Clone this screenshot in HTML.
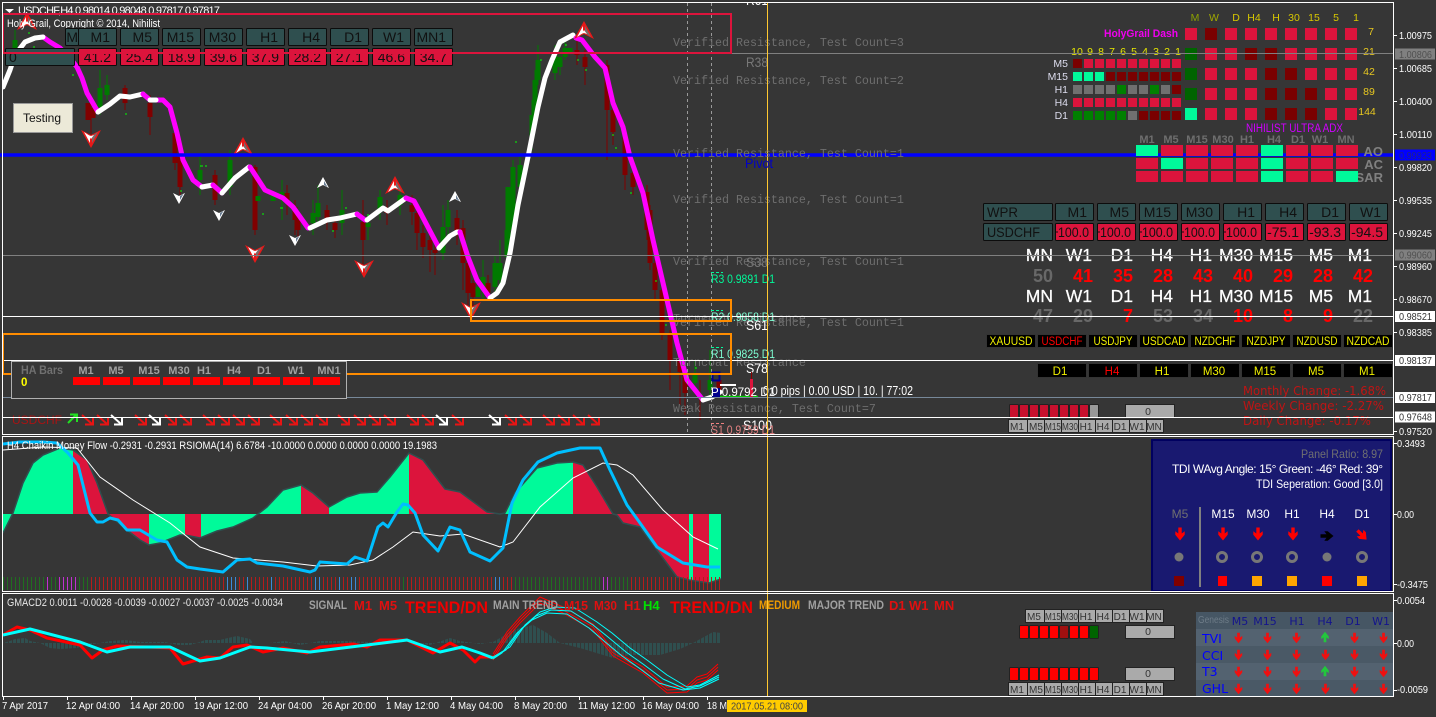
<!DOCTYPE html>
<html><head><meta charset="utf-8"><title>USDCHF,H4</title>
<style>
html,body{margin:0;padding:0;background:#363636;width:1436px;height:717px;overflow:hidden}
svg{display:block;position:absolute;left:0;top:0;font-family:"Liberation Sans",sans-serif}
.m{font-family:"Liberation Mono",monospace}
.d{font-family:"DejaVu Sans",sans-serif}
</style></head><body>
<svg width="1436" height="717" viewBox="0 0 1436 717" xmlns="http://www.w3.org/2000/svg">
<defs>
<clipPath id="c1"><rect x="3" y="3" width="1390" height="431"/></clipPath>
<clipPath id="c2"><rect x="3" y="437" width="1390" height="154"/></clipPath>
<clipPath id="c3"><rect x="3" y="594" width="1390" height="102"/></clipPath>
<pattern id="hb" width="4" height="10" patternUnits="userSpaceOnUse" x="1"><rect width="3" height="10" fill="#2f4f4f"/></pattern>
<path id="da" d="M-1.7,-6.5h3.4v6l3-2.2v3.4l-4.7,5.8-4.7,-5.8v-3.4l3,2.2z"/>
<path id="sa" d="M-6,-5L4,4M-3,4.5H5V-3" fill="none" stroke-width="2"/>
<g id="mu"><path d="M0,-10L10,8 0,3 -10,8Z" fill="#e81818"/><path d="M-1,-5L-7,6 -1,2Z" fill="#fff"/><path d="M1,-5L7,6 1,2Z" fill="#7a6a6a"/><path d="M0,-1L3,3 0,2 -3,3Z" fill="#fff"/></g>
<g id="wu"><path d="M0,-6L6,5 0,2 -6,5Z" fill="#fff"/><path d="M1,-2L4.5,4 1,2Z" fill="#667a90"/></g>
</defs>

<!-- candles -->
<g clip-path="url(#c1)">
<path fill="none" stroke="#800000" stroke-width="1" d="M91,95V135M125,85V110M150,95V135M175,120V170M180,150V195M215,170V205M255,165V235M287,185V215M295,200V235M298,215V240M327,205V230M335,218V238M363,200V270M387,200V225M412,195V225M417,205V250M423,225V258M430,235V272M435,245V275M457,210V245M463,220V290M468,255V305M473,280V310M488,275V300M577,40V65M585,50V85M607,60V160M613,105V145M625,130V190M633,170V195M647,185V240M650,205V270M655,260V300M662,285V340M670,330V390M680,350V405M685,365V415M700,380V420"/>
<path fill="none" stroke="#007a00" stroke-width="1" d="M15,30V60M100,70V115M107,75V100M200,155V195M230,150V195M282,180V220M313,200V235M318,185V225M342,190V235M368,215V240M380,190V220M400,190V215M443,205V260M448,200V235M483,260V300M495,255V295M500,240V285M507,215V265M513,160V240M520,155V195M532,100V150M535,70V120M538,45V85M555,45V80M560,50V75M565,42V60M695,360V390M710,350V400"/>
<path fill="none" stroke="#800000" stroke-width="5" d="M88,103V120M93,108V118M125,88V103M150,103V117M175,133V163M180,157V187M215,175V200M255,167V230M287,193V203M295,207V220M298,220V230M327,210V220M335,223V230M363,222V240M387,208V213M412,205V212M417,213V233M423,233V247M430,240V250M435,250V253M457,218V230M463,228V263M468,263V293M473,283V297M488,283V293M577,50V55M585,57V67M607,65V110M613,110V132M625,137V175M633,173V187M647,192V230M650,210V263M655,263V290M662,290V333M670,333V360M680,360V372M685,370V393M719,380V392"/>
<path fill="none" stroke="#007a00" stroke-width="5" d="M15,40V48M100,88V107M107,85V95M200,170V180M230,160V187M258,196V201M273,195V201M282,192V198M313,213V223M318,203V217M342,210V223M368,223V227M380,197V210M400,195V205M443,227V253M448,210V227M478,287V297M483,277V290M495,263V287M500,263V280M507,230V257M508,187V240M513,167V230M520,165V187M532,115V138M535,80V115M538,60V80M555,55V73M560,57V67M565,48V57M570,48V53M695,373V383M710,380V390"/>
<path fill="none" stroke="#0f0" stroke-width="1" d="M28,33h2M33,47h2M72,75h2M125,114h2M180,191h2M200,166h3M205,166h2M262,214h2M280,208h3M332,231h2M345,208h2M367,215h2M478,285h2M515,142h2M530,155h2M540,60h2M565,45h2M577,60h2M585,70h2M612,135h2M615,148h2M630,193h2M655,281h2M665,325h2M695,368h2"/>

<!-- price line -->
<g fill="none" stroke-width="5" stroke-linejoin="round" stroke-linecap="round">
<polyline stroke="#ff00ff" points="43,37 50,42 60,48 70,58 77,67 82,78 87,93 98,112"/>
<polyline stroke="#fff" points="3,87 10,70 15,55 25,42 35,38 43,37"/>
<polyline stroke="#fff" points="98,112 110,104 120,96 130,97 143,94"/>
<polyline stroke="#ff00ff" points="143,94 150,100 163,100 170,107 177,133 183,160 193,180 202,187"/>
<polyline stroke="#fff" points="150,100 156,100"/>
<polyline stroke="#fff" points="202,187 213,185"/>
<polyline stroke="#ff00ff" points="213,185 222,193"/>
<polyline stroke="#fff" points="222,193 235,178 249,167"/>
<polyline stroke="#ff00ff" points="250,167 265,190 283,198 293,207 308,228"/>
<polyline stroke="#fff" points="310,228 327,220 340,218 357,214"/>
<polyline stroke="#ff00ff" points="357,214 365,220"/>
<polyline stroke="#fff" points="367,220 383,208 388,211 406,198"/>
<polyline stroke="#ff00ff" points="406,198 414,201 420,212 439,248"/>
<polyline stroke="#fff" points="439,248 450,236 457,232 460,232"/>
<polyline stroke="#ff00ff" points="460,232 468,257 477,280 490,298"/>
<polyline stroke="#fff" points="490,298 497,293 503,283 510,253 518,205 528,157 538,107 545,78 552,60 560,42 573,35"/>
<polyline stroke="#ff00ff" points="576,38 582,40 595,57 605,68 613,103 623,127 630,157 643,193 653,240 667,300 677,343 687,380 703,400"/>
<polyline stroke="#fff" points="703,400 712,397 720,392"/>
</g>

<!-- markers -->
<use href="#mu" transform="translate(27,22)"/>
<use href="#mu" transform="translate(91,138) scale(1,-1)"/>
<use href="#mu" transform="translate(243,147)"/>
<use href="#wu" transform="translate(179,198) scale(1,-1)"/>
<use href="#wu" transform="translate(219,215) scale(1,-1)"/>
<use href="#wu" transform="translate(295,240) scale(1,-1)"/>
<use href="#wu" transform="translate(323,183)"/>
<use href="#mu" transform="translate(395,186)"/>
<use href="#wu" transform="translate(455,197)"/>
<use href="#mu" transform="translate(255,253) scale(1,-1)"/>
<use href="#mu" transform="translate(364,268) scale(1,-1)"/>
<use href="#mu" transform="translate(471,310) scale(1,-1)"/>
<use href="#mu" transform="translate(584,31)"/>
</g>

<!-- vertical lines -->
<path d="M687.5,3V434M711.5,3V434" stroke="#9a9a9a" stroke-dasharray="3 3" fill="none"/>

<!-- main chart text -->
<g clip-path="url(#c1)">
<g class="m" font-size="11.67" fill="#6e6e6e">
<text x="673" y="46">Verified Resistance, Test Count=3</text>
<text x="673" y="84">Verified Resistance, Test Count=2</text>
<text x="673" y="203">Verified Resistance, Test Count=1</text>
<text x="673" y="265">Verified Resistance, Test Count=1</text>
<text x="673" y="322">Turncoat Resistance</text>
<text x="673" y="326">Verified Resistance, Test Count=1</text>
<text x="673" y="366">Turncoat Resistance</text>
<text x="673" y="412">Weak Resistance, Test Count=7</text>
</g>
<g font-size="14">
<text x="746" y="5" fill="#fff" textLength="22" lengthAdjust="spacingAndGlyphs">R61</text>
<text x="746" y="67" fill="#777" textLength="22" lengthAdjust="spacingAndGlyphs">R38</text>
<text x="746" y="267" fill="#777" textLength="22" lengthAdjust="spacingAndGlyphs">S38</text>
<text x="746" y="330" fill="#fff" textLength="22" lengthAdjust="spacingAndGlyphs">S61</text>
<text x="746" y="373" fill="#fff" textLength="22" lengthAdjust="spacingAndGlyphs">S78</text>
<text x="743" y="430" fill="#fff" textLength="29" lengthAdjust="spacingAndGlyphs">S100</text>
</g>
<g font-size="11.5">
<path d="M711,272.5h12M711,310.5h12M711,347.5h12" stroke="#00fa9a" stroke-dasharray="3 2" fill="none"/>
<path d="M711,423.5h14" stroke="#f08080" stroke-dasharray="3 2" fill="none"/>
<text x="711" y="283" fill="#00fa9a" textLength="64" lengthAdjust="spacingAndGlyphs">R3 0.9891 D1</text>
<text x="711" y="321" fill="#7fffd4" textLength="64" lengthAdjust="spacingAndGlyphs">R2 0.9858 D1</text>
<text x="711" y="358" fill="#7fffd4" textLength="64" lengthAdjust="spacingAndGlyphs">R1 0.9825 D1</text>
<text x="711" y="434" fill="#e08080" textLength="64" lengthAdjust="spacingAndGlyphs">S1 0.9759 D1</text>
</g>
<rect x="712.5" y="372.5" width="7" height="8" fill="none" stroke="#00008b" stroke-width="2"/>
<rect x="712" y="388" width="8" height="9" fill="#00008b"/>
<path d="M720,385h16" stroke="#fff" stroke-width="2"/>
<path d="M720,396.5h38" stroke="#0c0" stroke-width="1.5"/>
<path d="M751.5,379V397" stroke="#dc143c" stroke-width="3"/>
<path d="M751.5,372V379" stroke="#800" stroke-width="1"/>
<text x="711" y="396" fill="#fff" font-size="11.5" textLength="64" lengthAdjust="spacingAndGlyphs">P 0.9792 D1</text>
<text x="763" y="395" fill="#fff" font-size="12.5" textLength="150" lengthAdjust="spacingAndGlyphs">0.0 pips | 0.00 USD | 10. | 77:02</text>
</g>

<!-- header text -->
<path d="M5,9h9l-4.5,4z" fill="#fff"/>
<text x="18" y="14" fill="#fff" font-size="11" textLength="202" lengthAdjust="spacing" clip-path="url(#c1)">USDCHF,H4 0.98014 0.98048 0.97817 0.97817</text>
<text x="7" y="27" fill="#fff" font-size="11" textLength="153" lengthAdjust="spacingAndGlyphs">Holy Grail, Copyright © 2014, Nihilist</text>

<!-- WPR top-left -->
<g fill="#2f4f4f" stroke="#0c0c0c">
<rect x="65.5" y="28.5" width="13" height="17" rx="1"/>
<rect x="78.5" y="28.5" width="38" height="17" rx="1"/><rect x="120.5" y="28.5" width="38" height="17" rx="1"/><rect x="162.5" y="28.5" width="38" height="17" rx="1"/><rect x="204.5" y="28.5" width="38" height="17" rx="1"/><rect x="246.5" y="28.5" width="38" height="17" rx="1"/><rect x="288.5" y="28.5" width="38" height="17" rx="1"/><rect x="330.5" y="28.5" width="38" height="17" rx="1"/><rect x="372.5" y="28.5" width="38" height="17" rx="1"/><rect x="414.5" y="28.5" width="38" height="17" rx="1"/>
</g>
<g fill="#dc143c" stroke="#0c0c0c">
<rect x="78.5" y="48.5" width="38" height="17" rx="1"/><rect x="120.5" y="48.5" width="38" height="17" rx="1"/><rect x="162.5" y="48.5" width="38" height="17" rx="1"/><rect x="204.5" y="48.5" width="38" height="17" rx="1"/><rect x="246.5" y="48.5" width="38" height="17" rx="1"/><rect x="288.5" y="48.5" width="38" height="17" rx="1"/><rect x="330.5" y="48.5" width="38" height="17" rx="1"/><rect x="372.5" y="48.5" width="38" height="17" rx="1"/><rect x="414.5" y="48.5" width="38" height="17" rx="1"/>
</g>
<rect x="5.5" y="48.5" width="69" height="17" rx="1" fill="#2f4f4f" stroke="#0c0c0c"/>
<g font-size="14" fill="#111" text-anchor="end">
<text x="78" y="42">M</text><text x="110" y="42">M1</text><text x="152" y="42">M5</text><text x="194" y="42">M15</text><text x="236" y="42">M30</text><text x="278" y="42">H1</text><text x="320" y="42">H4</text><text x="362" y="42">D1</text><text x="404" y="42">W1</text><text x="446" y="42">MN1</text>
<text x="111" y="62">41.2</text><text x="153" y="62">25.4</text><text x="195" y="62">18.9</text><text x="237" y="62">39.6</text><text x="279" y="62">37.9</text><text x="321" y="62">28.2</text><text x="363" y="62">27.1</text><text x="405" y="62">46.6</text><text x="447" y="62">34.7</text>
</g>
<text x="9" y="62" font-size="14" fill="#111">0</text>

<!-- Testing -->
<rect x="13.5" y="103.5" width="59" height="29" fill="#ece9d8" stroke="#999"/>
<text x="42" y="122" font-size="12" fill="#111" text-anchor="middle">Testing</text>

<!-- arrows row -->
<text x="12" y="424" font-size="12" fill="#a81414">USDCHF</text>
<path d="M68,423L76,415M70,414.5H77V422" fill="none" stroke="#22e022" stroke-width="2"/>
<g stroke="#e81414">
<use href="#sa" transform="translate(88,420)"/><use href="#sa" transform="translate(103,420)"/><use href="#sa" transform="translate(141,420)"/><use href="#sa" transform="translate(171,420)"/><use href="#sa" transform="translate(186,420)"/><use href="#sa" transform="translate(209,420)"/><use href="#sa" transform="translate(224,420)"/><use href="#sa" transform="translate(239,420)"/><use href="#sa" transform="translate(254,420)"/><use href="#sa" transform="translate(276,420)"/><use href="#sa" transform="translate(292,420)"/><use href="#sa" transform="translate(307,420)"/><use href="#sa" transform="translate(322,420)"/><use href="#sa" transform="translate(344,420)"/><use href="#sa" transform="translate(360,420)"/><use href="#sa" transform="translate(375,420)"/><use href="#sa" transform="translate(390,420)"/><use href="#sa" transform="translate(413,420)"/><use href="#sa" transform="translate(428,420)"/><use href="#sa" transform="translate(458,420)"/><use href="#sa" transform="translate(511,420)"/><use href="#sa" transform="translate(526,420)"/><use href="#sa" transform="translate(549,420)"/><use href="#sa" transform="translate(564,420)"/><use href="#sa" transform="translate(579,420)"/><use href="#sa" transform="translate(594,420)"/>
</g>
<g stroke="#fff">
<use href="#sa" transform="translate(117,420)"/><use href="#sa" transform="translate(155,420)"/><use href="#sa" transform="translate(442,420)"/><use href="#sa" transform="translate(495,420)"/>
</g>

<!-- Holygrail dash -->
<text x="1104" y="37" font-size="11" font-weight="bold" fill="#f000f0" textLength="74" lengthAdjust="spacingAndGlyphs">HolyGrail Dash</text>
<g font-size="10.5" text-anchor="middle" fill="#d8c800">
<text x="1195" y="21" fill="#8aa000">M</text><text x="1214" y="21" fill="#a0a800">W</text><text x="1236" y="21">D</text><text x="1254" y="21">H4</text><text x="1276" y="21">H</text><text x="1294" y="21">30</text><text x="1314" y="21">15</text><text x="1336" y="21">5</text><text x="1356" y="21">1</text>
</g>
<g font-size="10.5" text-anchor="middle" fill="#e8c820">
<text x="1371" y="35">7</text><text x="1369" y="55">21</text><text x="1369" y="75">42</text><text x="1369" y="95">89</text><text x="1367" y="115">144</text>
</g>
<g fill="#dc143c">
<rect x="1185" y="28" width="12" height="12"/><rect x="1225" y="28" width="12" height="12"/><rect x="1245" y="28" width="12" height="12"/><rect x="1265" y="28" width="12" height="12"/><rect x="1285" y="28" width="12" height="12"/><rect x="1305" y="28" width="12" height="12"/><rect x="1325" y="28" width="12" height="12"/><rect x="1345" y="28" width="12" height="12"/>
<rect x="1205" y="48" width="12" height="12"/><rect x="1225" y="48" width="12" height="12"/><rect x="1285" y="48" width="12" height="12"/><rect x="1305" y="48" width="12" height="12"/><rect x="1325" y="48" width="12" height="12"/><rect x="1345" y="48" width="12" height="12"/>
<rect x="1205" y="68" width="12" height="12"/><rect x="1225" y="68" width="12" height="12"/><rect x="1245" y="68" width="12" height="12"/><rect x="1305" y="68" width="12" height="12"/><rect x="1325" y="68" width="12" height="12"/><rect x="1345" y="68" width="12" height="12"/>
<rect x="1205" y="88" width="12" height="12"/><rect x="1225" y="88" width="12" height="12"/><rect x="1245" y="88" width="12" height="12"/><rect x="1325" y="88" width="12" height="12"/><rect x="1345" y="88" width="12" height="12"/>
<rect x="1205" y="108" width="12" height="12"/><rect x="1225" y="108" width="12" height="12"/><rect x="1245" y="108" width="12" height="12"/><rect x="1325" y="108" width="12" height="12"/><rect x="1345" y="108" width="12" height="12"/>
</g>
<g fill="#7a0000">
<rect x="1205" y="28" width="12" height="12"/><rect x="1245" y="48" width="12" height="12"/><rect x="1265" y="48" width="12" height="12"/><rect x="1265" y="68" width="12" height="12"/><rect x="1285" y="68" width="12" height="12"/><rect x="1265" y="88" width="12" height="12"/><rect x="1285" y="88" width="12" height="12"/><rect x="1305" y="88" width="12" height="12"/><rect x="1265" y="108" width="12" height="12"/><rect x="1285" y="108" width="12" height="12"/><rect x="1305" y="108" width="12" height="12"/>
</g>
<g fill="#006400"><rect x="1185" y="48" width="12" height="12"/><rect x="1185" y="68" width="12" height="12"/><rect x="1185" y="88" width="12" height="12"/></g>
<rect x="1185" y="108" width="12" height="12" fill="#00fa9a"/>

<g font-size="10.5" fill="#e8e800" text-anchor="middle">
<text x="1077" y="55">10</text><text x="1090" y="55">9</text><text x="1101" y="55">8</text><text x="1112" y="55">7</text><text x="1123" y="55">6</text><text x="1134" y="55">5</text><text x="1145" y="55">4</text><text x="1156" y="55">3</text><text x="1167" y="55">2</text><text x="1178" y="55">1</text>
</g>
<g font-size="10.5" fill="#dde" text-anchor="end">
<text x="1068" y="67">M5</text><text x="1068" y="80">M15</text><text x="1068" y="93">H1</text><text x="1068" y="106">H4</text><text x="1068" y="119">D1</text>
</g>
<!-- small grid -->
<g fill="#dc143c">
<rect x="1084" y="59" width="9" height="9"/><rect x="1095" y="59" width="9" height="9"/><rect x="1106" y="59" width="9" height="9"/><rect x="1117" y="59" width="9" height="9"/><rect x="1128" y="59" width="9" height="9"/><rect x="1139" y="59" width="9" height="9"/><rect x="1150" y="59" width="9" height="9"/><rect x="1161" y="59" width="9" height="9"/><rect x="1172" y="59" width="9" height="9"/>
<rect x="1073" y="98" width="9" height="9"/><rect x="1084" y="98" width="9" height="9"/><rect x="1095" y="98" width="9" height="9"/><rect x="1106" y="98" width="9" height="9"/><rect x="1117" y="98" width="9" height="9"/><rect x="1128" y="98" width="9" height="9"/><rect x="1139" y="98" width="9" height="9"/><rect x="1150" y="98" width="9" height="9"/><rect x="1161" y="98" width="9" height="9"/><rect x="1172" y="98" width="9" height="9"/>
</g>
<g fill="#7a0000">
<rect x="1073" y="59" width="9" height="9"/>
<rect x="1106" y="72" width="9" height="9"/><rect x="1117" y="72" width="9" height="9"/><rect x="1128" y="72" width="9" height="9"/><rect x="1139" y="72" width="9" height="9"/><rect x="1150" y="72" width="9" height="9"/><rect x="1161" y="72" width="9" height="9"/><rect x="1172" y="72" width="9" height="9"/>
<rect x="1172" y="85" width="9" height="9"/>
<rect x="1139" y="111" width="9" height="9"/><rect x="1150" y="111" width="9" height="9"/><rect x="1161" y="111" width="9" height="9"/><rect x="1172" y="111" width="9" height="9"/>
</g>
<g fill="#00fa9a"><rect x="1073" y="72" width="9" height="9"/><rect x="1084" y="72" width="9" height="9"/><rect x="1095" y="72" width="9" height="9"/></g>
<g fill="#707070">
<rect x="1073" y="85" width="9" height="9"/><rect x="1084" y="85" width="9" height="9"/><rect x="1095" y="85" width="9" height="9"/><rect x="1106" y="85" width="9" height="9"/><rect x="1128" y="85" width="9" height="9"/><rect x="1139" y="85" width="9" height="9"/><rect x="1161" y="85" width="9" height="9"/><rect x="1128" y="111" width="9" height="9"/>
</g>
<g fill="#008000">
<rect x="1117" y="85" width="9" height="9"/><rect x="1150" y="85" width="9" height="9"/>
<rect x="1073" y="111" width="9" height="9"/><rect x="1084" y="111" width="9" height="9"/><rect x="1095" y="111" width="9" height="9"/><rect x="1106" y="111" width="9" height="9"/><rect x="1117" y="111" width="9" height="9"/>
</g>

<!-- WPR right -->
<g fill="#2f4f4f" stroke="#0c0c0c">
<rect x="983.5" y="203.5" width="69" height="17" rx="1"/><rect x="1055.5" y="203.5" width="38" height="17" rx="1"/><rect x="1097.5" y="203.5" width="38" height="17" rx="1"/><rect x="1139.5" y="203.5" width="38" height="17" rx="1"/><rect x="1181.5" y="203.5" width="38" height="17" rx="1"/><rect x="1223.5" y="203.5" width="38" height="17" rx="1"/><rect x="1265.5" y="203.5" width="38" height="17" rx="1"/><rect x="1307.5" y="203.5" width="38" height="17" rx="1"/><rect x="1349.5" y="203.5" width="38" height="17" rx="1"/>
<rect x="983.5" y="223.5" width="69" height="17" rx="1"/>
</g>
<g fill="#dc143c" stroke="#0c0c0c">
<rect x="1055.5" y="223.5" width="38" height="17" rx="1"/><rect x="1097.5" y="223.5" width="38" height="17" rx="1"/><rect x="1139.5" y="223.5" width="38" height="17" rx="1"/><rect x="1181.5" y="223.5" width="38" height="17" rx="1"/><rect x="1223.5" y="223.5" width="38" height="17" rx="1"/><rect x="1265.5" y="223.5" width="38" height="17" rx="1"/><rect x="1307.5" y="223.5" width="38" height="17" rx="1"/><rect x="1349.5" y="223.5" width="38" height="17" rx="1"/>
</g>
<g font-size="14" fill="#111">
<text x="987" y="217" textLength="31" lengthAdjust="spacingAndGlyphs">WPR</text>
<text x="987" y="237" textLength="53" lengthAdjust="spacingAndGlyphs">USDCHF</text>
<text x="1058" y="237" textLength="31" lengthAdjust="spacingAndGlyphs">100.0</text><text x="1100" y="237" textLength="31" lengthAdjust="spacingAndGlyphs">100.0</text><text x="1142" y="237" textLength="31" lengthAdjust="spacingAndGlyphs">100.0</text><text x="1184" y="237" textLength="31" lengthAdjust="spacingAndGlyphs">100.0</text><text x="1226" y="237" textLength="31" lengthAdjust="spacingAndGlyphs">100.0</text>
</g>
<g font-size="14" fill="#111" text-anchor="end">
<text x="1087" y="217">M1</text><text x="1129" y="217">M5</text><text x="1171" y="217">M15</text><text x="1213" y="217">M30</text><text x="1255" y="217">H1</text><text x="1297" y="217">H4</text><text x="1339" y="217">D1</text><text x="1381" y="217">W1</text>
<text x="1299" y="237">-75.1</text><text x="1341" y="237">-93.3</text><text x="1383" y="237">-94.5</text>
</g>
<path d="M1056,232h2M1098,232h2M1140,232h2M1182,232h2M1224,232h2" stroke="#111"/>

<!-- big labels -->
<g font-size="17.5" fill="#fff" text-anchor="end" stroke="#fff" stroke-width=".25">
<text x="1053" y="261">MN</text><text x="1092" y="261">W1</text><text x="1133" y="261">D1</text><text x="1173" y="261">H4</text><text x="1212" y="261">H1</text><text x="1253" y="261">M30</text><text x="1293" y="261">M15</text><text x="1333" y="261">M5</text><text x="1372" y="261">M1</text>
<text x="1053" y="302">MN</text><text x="1092" y="302">W1</text><text x="1133" y="302">D1</text><text x="1173" y="302">H4</text><text x="1212" y="302">H1</text><text x="1253" y="302">M30</text><text x="1293" y="302">M15</text><text x="1333" y="302">M5</text><text x="1372" y="302">M1</text>
</g>
<g font-size="18" fill="#f00" text-anchor="end" font-weight="bold">
<text x="1053" y="282" fill="#686868">50</text><text x="1093" y="282">41</text><text x="1133" y="282">35</text><text x="1173" y="282">28</text><text x="1213" y="282">43</text><text x="1253" y="282">40</text><text x="1293" y="282">29</text><text x="1333" y="282">28</text><text x="1373" y="282">42</text>
<text x="1053" y="322" fill="#686868">47</text><text x="1093" y="322" fill="#686868">29</text><text x="1133" y="322">7</text><text x="1173" y="322" fill="#686868">53</text><text x="1213" y="322" fill="#686868">34</text><text x="1253" y="322">10</text><text x="1293" y="322">8</text><text x="1333" y="322">9</text><text x="1373" y="322" fill="#686868">22</text>
</g>

<!-- symbol boxes -->
<g fill="#000" stroke="#333">
<rect x="986.5" y="334.5" width="49" height="13"/><rect x="1037.5" y="334.5" width="49" height="13"/><rect x="1088.5" y="334.5" width="49" height="13"/><rect x="1139.5" y="334.5" width="49" height="13"/><rect x="1190.5" y="334.5" width="49" height="13"/><rect x="1241.5" y="334.5" width="49" height="13"/><rect x="1292.5" y="334.5" width="49" height="13"/><rect x="1343.5" y="334.5" width="49" height="13"/>
<rect x="1037.5" y="363.5" width="49" height="14"/><rect x="1088.5" y="363.5" width="49" height="14"/><rect x="1139.5" y="363.5" width="49" height="14"/><rect x="1190.5" y="363.5" width="49" height="14"/><rect x="1241.5" y="363.5" width="49" height="14"/><rect x="1292.5" y="363.5" width="49" height="14"/><rect x="1343.5" y="363.5" width="49" height="14"/>
</g>
<g font-size="11.5" fill="#f0f000" text-anchor="middle">
<text x="1011" y="345" textLength="43" lengthAdjust="spacingAndGlyphs">XAUUSD</text><text x="1062" y="345" fill="#f00" textLength="41" lengthAdjust="spacingAndGlyphs">USDCHF</text><text x="1113" y="345" textLength="39" lengthAdjust="spacingAndGlyphs">USDJPY</text><text x="1164" y="345" textLength="43" lengthAdjust="spacingAndGlyphs">USDCAD</text><text x="1215" y="345" textLength="41" lengthAdjust="spacingAndGlyphs">NZDCHF</text><text x="1266" y="345" textLength="39" lengthAdjust="spacingAndGlyphs">NZDJPY</text><text x="1317" y="345" textLength="41" lengthAdjust="spacingAndGlyphs">NZDUSD</text><text x="1368" y="345" textLength="43" lengthAdjust="spacingAndGlyphs">NZDCAD</text>
<text x="1060" y="375">D1</text><text x="1112" y="375" fill="#f00">H4</text><text x="1162" y="375">H1</text><text x="1214" y="375">M30</text><text x="1265" y="375">M15</text><text x="1316" y="375">M5</text><text x="1367" y="375">M1</text>
</g>

<!-- change -->
<g class="d" font-size="12" fill="#c01414">
<text x="1243" y="395" textLength="143" lengthAdjust="spacingAndGlyphs">Monthly Change: -1.68%</text>
<text x="1243" y="410" textLength="141" lengthAdjust="spacingAndGlyphs">Weekly Change: -2.27%</text>
<text x="1243" y="425" textLength="128" lengthAdjust="spacingAndGlyphs">Daily Change: -0.17%</text>
</g>

<!-- mini bars top -->
<g stroke="#222" stroke-width="1">
<g fill="#c8102e"><rect x="1009.5" y="404.5" width="9" height="13" rx="1"/><rect x="1019.5" y="404.5" width="9" height="13" rx="1"/><rect x="1029.5" y="404.5" width="9" height="13" rx="1"/><rect x="1039.5" y="404.5" width="9" height="13" rx="1"/><rect x="1049.5" y="404.5" width="9" height="13" rx="1"/><rect x="1059.5" y="404.5" width="9" height="13" rx="1"/><rect x="1069.5" y="404.5" width="9" height="13" rx="1"/><rect x="1079.5" y="404.5" width="9" height="13" rx="1"/></g>
<rect x="1089.5" y="404.5" width="9" height="13" rx="1" fill="#999"/>
<rect x="1125.5" y="404.5" width="49" height="13" fill="#aaa"/>
<g fill="#aaa"><rect x="1008.5" y="419.5" width="19" height="13"/><rect x="1027.5" y="419.5" width="17" height="13"/><rect x="1044.5" y="419.5" width="17" height="13"/><rect x="1061.5" y="419.5" width="17" height="13"/><rect x="1078.5" y="419.5" width="17" height="13"/><rect x="1095.5" y="419.5" width="17" height="13"/><rect x="1112.5" y="419.5" width="17" height="13"/><rect x="1129.5" y="419.5" width="17" height="13"/><rect x="1146.5" y="419.5" width="17" height="13"/></g>
</g>
<text x="1148" y="415" font-size="10.5" fill="#333" text-anchor="middle">0</text>
<g font-size="10" fill="#333" text-anchor="middle">
<text x="1017" y="430">M1</text><text x="1036" y="430">M5</text><text x="1053" y="430" textLength="16" lengthAdjust="spacingAndGlyphs">M15</text><text x="1070" y="430" textLength="16" lengthAdjust="spacingAndGlyphs">M30</text><text x="1086" y="430">H1</text><text x="1103" y="430">H4</text><text x="1120" y="430">D1</text><text x="1137" y="430">W1</text><text x="1154" y="430">MN</text>
</g>

<!-- NIHILIST ADX -->
<text x="1246" y="132" font-size="11.5" fill="#d000ff" textLength="97" lengthAdjust="spacingAndGlyphs">NIHILIST ULTRA ADX</text>
<g font-size="11" font-weight="bold" fill="#6e6e6e" text-anchor="middle">
<text x="1147" y="143">M1</text><text x="1171" y="143">M5</text><text x="1197" y="143">M15</text><text x="1223" y="143">M30</text><text x="1247" y="143">H1</text><text x="1274" y="143">H4</text><text x="1298" y="143">D1</text><text x="1320" y="143">W1</text><text x="1346" y="143">MN</text>
</g>

<!-- horizontal lines (on top of dashboards) -->
<g fill="none">
<path d="M3,53.5H1393M3,255.5H1393" stroke="#808080"/>
<path d="M3,316.5H1393M3,360.5H1393M3,417.5H1393" stroke="#fff"/>
<path d="M3,397.5H1393" stroke="#778899"/>
<path d="M0,155H1393" stroke="#0000ff" stroke-width="3.4"/>
<path d="M767.5,3V696" stroke="#ffc830"/>
<rect x="3" y="14" width="728" height="39" stroke="#dc143c" stroke-width="2"/>
<rect x="471" y="300" width="260" height="21" stroke="#ff8c00" stroke-width="2"/>
<rect x="3" y="334" width="728" height="40" stroke="#ff8c00" stroke-width="2"/>
</g>

<!-- text above blue line -->
<text class="m" x="673" y="157" font-size="11.67" fill="#6e6e6e">Verified Resistance, Test Count=1</text>
<text x="745" y="168" font-size="14" fill="#0000c8" textLength="28" lengthAdjust="spacingAndGlyphs">Pivot</text>
<g font-size="13" font-weight="bold" fill="#808080" text-anchor="end">
<text x="1383" y="156">AO</text><text x="1383" y="169">AC</text><text x="1383" y="182">SAR</text>
</g>

<!-- HA bars -->
<rect x="11.5" y="361.5" width="335" height="37" fill="#363636" stroke="#b0b0b0"/>
<text x="21" y="374" font-size="11.5" font-weight="bold" fill="#707070" textLength="42" lengthAdjust="spacingAndGlyphs">HA Bars</text>
<text x="21" y="386" font-size="11.5" font-weight="bold" fill="#ffff00">0</text>
<g font-size="11" font-weight="bold" fill="#a0a0a0" text-anchor="middle">
<text x="86" y="374">M1</text><text x="116" y="374">M5</text><text x="149" y="374">M15</text><text x="179" y="374">M30</text><text x="204" y="374">H1</text><text x="234" y="374">H4</text><text x="264" y="374">D1</text><text x="296" y="374">W1</text><text x="329" y="374">MN1</text>
</g>
<g fill="#ff0000"><rect x="73" y="377" width="27" height="8"/><rect x="103" y="377" width="27" height="8"/><rect x="133" y="377" width="27" height="8"/><rect x="163" y="377" width="27" height="8"/><rect x="193" y="377" width="27" height="8"/><rect x="223" y="377" width="27" height="8"/><rect x="253" y="377" width="27" height="8"/><rect x="283" y="377" width="27" height="8"/><rect x="313" y="377" width="27" height="8"/></g>

<!-- ADX grid above blue -->
<g fill="#dc143c">
<rect x="1161" y="145" width="22" height="11"/><rect x="1186" y="145" width="22" height="11"/><rect x="1211" y="145" width="22" height="11"/><rect x="1236" y="145" width="22" height="11"/><rect x="1286" y="145" width="22" height="11"/><rect x="1311" y="145" width="22" height="11"/><rect x="1336" y="145" width="22" height="11"/>
<rect x="1136" y="158" width="22" height="11"/><rect x="1186" y="158" width="22" height="11"/><rect x="1211" y="158" width="22" height="11"/><rect x="1236" y="158" width="22" height="11"/><rect x="1286" y="158" width="22" height="11"/><rect x="1311" y="158" width="22" height="11"/><rect x="1336" y="158" width="22" height="11"/>
<rect x="1136" y="171" width="22" height="11"/><rect x="1161" y="171" width="22" height="11"/><rect x="1186" y="171" width="22" height="11"/><rect x="1211" y="171" width="22" height="11"/><rect x="1236" y="171" width="22" height="11"/><rect x="1286" y="171" width="22" height="11"/><rect x="1311" y="171" width="22" height="11"/>
</g>
<g fill="#00fa9a">
<rect x="1136" y="145" width="22" height="11"/><rect x="1261" y="145" width="22" height="11"/>
<rect x="1161" y="158" width="22" height="11"/><rect x="1261" y="158" width="22" height="11"/>
<rect x="1261" y="171" width="22" height="11"/><rect x="1336" y="171" width="22" height="11"/>
</g>

<!-- Panel 2 -->
<g clip-path="url(#c2)">
<g>
<polygon fill="#00fa9a" points="3,514 3,533 13,513 23,483 33,463 43,455 60,448 73,450 73,514"/>
<polygon fill="#dc143c" points="73,514 73,450 87,460 97,483 108,514"/>
<polygon fill="#dc143c" points="108,514 127,530 140,540 149,545 149,514"/>
<polygon fill="#00fa9a" points="149,514 149,545 160,543 180,535 185,535 185,514"/>
<polygon fill="#dc143c" points="185,514 185,535 200,538 201,538 201,514"/>
<polygon fill="#00fa9a" points="201,514 201,538 217,531 233,527 253,518 258,514"/>
<polygon fill="#00fa9a" points="258,514 267,507 283,490 301,485 301,514"/>
<polygon fill="#dc143c" points="301,514 301,485 313,493 329,507 329,514"/>
<polygon fill="#00fa9a" points="329,514 329,507 347,497 360,493 377,492 390,477 409,454 409,514"/>
<polygon fill="#dc143c" points="409,514 409,453 423,460 445,489 460,492 487,512 500,514"/>
<polygon fill="#00fa9a" points="505,514 515,493 537,468 557,463 573,462 573,514"/>
<polygon fill="#dc143c" points="573,514 573,462 583,465 597,487 613,514"/>
<polygon fill="#dc143c" points="613,514 617,515 623,523 640,527 657,550 677,577 689,580 689,514"/>
<polygon fill="#00fa9a" points="689,514 689,580 693,581 693,514"/>
<polygon fill="#dc143c" points="693,514 693,581 709,583 709,514"/>
<polygon fill="#00fa9a" points="709,514 709,583 721,579 721,514"/>
</g>
<g fill="none" stroke="#2f4f4f" stroke-width="1.5" stroke-linejoin="round">
<polyline points="3,533 13,513 23,483 33,463 43,455 60,448 73,450 87,460 97,483 108,514 127,530 140,540 149,545 160,543 180,535 185,535 200,538 217,531 233,527 253,518 258,514 267,507 283,490 301,485 313,493 329,507 347,497 360,493 377,492 390,477 409,453 423,460 445,489 460,492 487,512 500,514 505,513 515,493 537,468 557,463 573,462 583,465 597,487 613,514 617,515 623,523 640,527 657,550 677,577 689,580 709,583 721,579"/>
</g>
<g fill="none" stroke-width="13">
<path d="M3,583.5H44M51,583.5H56M79,583.5H88M403,583.5H404M515,583.5H600M611,583.5H628" stroke="#1f6f1f" stroke-dasharray="1 3"/>
<path d="M91,583.5H228M239,583.5H244M251,583.5H268M275,583.5H312M323,583.5H336M343,583.5H348M359,583.5H400M407,583.5H492M503,583.5H512M631,583.5H722" stroke="#b41c1c" stroke-dasharray="1 3"/>
<path d="M47,583.5H48M59,583.5H76M603,583.5H608" stroke="#c030d0" stroke-dasharray="1 3"/>
<path d="M227,583.5H236M247,583.5H248M271,583.5H272M315,583.5H320M339,583.5H340M351,583.5H356M495,583.5H500" stroke="#3a8ad8" stroke-dasharray="1 3"/>
</g>
<polyline fill="none" stroke="#fff" stroke-width="1" points="3,450 43,447 77,448 100,477 133,500 170,523 200,547 233,558 283,562 317,566 350,565 373,560 393,547 413,532 440,536 463,534 500,547 513,542 540,507 573,478 603,463 617,465 633,475 663,510 693,537 718,549"/>
<polyline fill="none" stroke="#00bfff" stroke-width="3" stroke-linejoin="round" points="3,444 20,442 43,442 57,443 68,453 78,465 90,513 97,522 103,522 110,518 118,520 127,530 140,530 157,540 167,542 177,560 187,567 200,569 223,572 237,560 250,559 257,563 283,566 310,572 315,570 320,562 347,564 355,557 367,561 378,527 383,523 388,527 397,512 403,504 408,505 415,513 423,535 438,551 450,527 460,530 470,552 490,561 503,548 512,503 523,480 538,462 557,453 580,448 600,448 610,470 627,505 640,523 657,547 683,563 707,567 720,567"/>
</g>
<text x="7" y="449" fill="#fff" font-size="11" textLength="430" lengthAdjust="spacingAndGlyphs">H4 Chaikin Money Flow -0.2931 -0.2931  RSIOMA(14) 6.6784 -10.0000 0.0000 0.0000 0.0000 19.1983</text>

<!-- blue panel -->
<rect x="1152" y="440" width="239" height="151" fill="#191970" stroke="#000060" stroke-width="2"/>
<g font-size="12" text-anchor="end" fill="#fff">
<text x="1383" y="458" fill="#707070" textLength="82" lengthAdjust="spacingAndGlyphs">Panel Ratio: 8.97</text>
<text x="1383" y="473" textLength="211" lengthAdjust="spacing">TDI WAvg Angle: 15° Green: -46° Red: 39°</text>
<text x="1383" y="488" textLength="127" lengthAdjust="spacingAndGlyphs">TDI Seperation: Good [3.0]</text>
</g>
<g font-size="12" text-anchor="middle" fill="#fff">
<text x="1180" y="518" fill="#707070">M5</text><text x="1223" y="518">M15</text><text x="1258" y="518">M30</text><text x="1292" y="518">H1</text><text x="1327" y="518">H4</text><text x="1362" y="518">D1</text>
</g>
<path d="M1200,507V587" stroke="#808080" stroke-width="2"/>
<g fill="#ff0000">
<use href="#da" transform="translate(1180,534)"/><use href="#da" transform="translate(1223,534)"/><use href="#da" transform="translate(1258,534)"/><use href="#da" transform="translate(1293,534)"/>
<use href="#da" transform="translate(1362,535) rotate(-45)"/>
</g>
<use href="#da" transform="translate(1327,536) rotate(-90)" fill="#000"/>
<g fill="#777"><circle cx="1179" cy="557" r="4.5"/><circle cx="1327" cy="557" r="4.5"/></g>
<g fill="none" stroke="#777" stroke-width="3"><circle cx="1222" cy="557" r="4.5"/><circle cx="1257" cy="557" r="4.5"/><circle cx="1292" cy="557" r="4.5"/><circle cx="1362" cy="557" r="4.5"/></g>
<rect x="1174" y="576" width="10" height="10" fill="#800000"/>
<rect x="1218" y="576" width="9" height="10" fill="#f00"/>
<rect x="1252" y="576" width="10" height="10" fill="#ffa500"/>
<rect x="1287" y="576" width="10" height="10" fill="#ffa500"/>
<rect x="1322" y="576" width="10" height="10" fill="#f00"/>
<rect x="1357" y="576" width="10" height="10" fill="#ffa500"/>

<!-- Panel 3 -->
<g clip-path="url(#c3)">
<polygon fill="url(#hb)" points="3,643 10,641 15,639 25,638 30,641 40,643 50,648 60,649 77,648 85,645 100,643 110,641 125,640 140,642 165,642 178,645 190,645 200,642 205,640 220,640 228,638 237,636 250,639 253,643 270,643 285,641 300,645 320,641 345,641 370,642 410,643 430,645 450,638 460,641 480,644 493,642 500,638 513,630 533,625 547,633 560,643 580,648 613,658 630,655 660,655 680,649 693,643 713,632 721,633 721,643"/>
<g fill="none" stroke="#f00" stroke-linejoin="round">
<polyline stroke-width="3" points="3,635 17,627 30,630 47,638 80,645 92,658 103,650 117,646 150,647 170,648 183,664 207,657 220,658 233,647 247,645 263,652 283,648 307,653 320,647 353,644 367,647 380,640 407,640 433,653 450,643 463,650 475,662 480,657 493,657"/>
<polyline stroke-width="1" transform="translate(0,-3)" points="493,657 507,635 520,620 540,600 563,610 593,627 613,653 643,670 667,690 687,689 697,680 707,677 718,667"/>
<polyline stroke-width="1" points="493,657 507,635 520,620 540,600 563,610 593,627 613,653 643,670 667,690 687,689 697,680 707,677 718,667"/>
<polyline stroke-width="1" transform="translate(0,3)" points="493,657 507,635 520,620 540,600 563,610 593,627 613,653 643,670 667,690 687,689 697,680 707,677 718,667"/>
</g>
<g fill="none" stroke="#00ffff" stroke-linejoin="round">
<polyline stroke-width="3" points="3,635 30,629 80,642 107,652 130,647 170,647 200,661 220,658 250,647 267,648 310,652 367,645 407,640 440,652 462,647 480,653 493,658"/>
<polyline stroke-width="1" points="493,657 510,647 525,625 540,612 555,607 575,608 597,622 612,633 630,648 647,660 667,675 687,687 700,685 719,675"/>
<polyline stroke-width="1" points="493,658 506,650 521,629 536,616 551,610 571,611 593,625 608,637 626,652 643,664 663,679 685,689 700,686 719,677"/>
<polyline stroke-width="1" points="493,659 502,653 517,633 532,620 547,613 567,614 589,628 604,641 622,656 639,668 659,683 683,690 700,688 719,679"/>
</g>
</g>

<text x="7" y="606" fill="#e8e8e8" font-size="11" textLength="276" lengthAdjust="spacingAndGlyphs">GMACD2 0.0011 -0.0028 -0.0039 -0.0027 -0.0037 -0.0025 -0.0034</text>
<g font-weight="bold" font-size="12">
<text x="309" y="609" fill="#a0a0a0" textLength="38" lengthAdjust="spacingAndGlyphs">SIGNAL</text>
<text x="354" y="610" fill="#e01010" font-size="13">M1</text>
<text x="379" y="610" fill="#e01010" font-size="13">M5</text>
<text x="405" y="613" fill="#f00000" font-size="17" textLength="83" lengthAdjust="spacingAndGlyphs">TREND/DN</text>
<text x="493" y="609" fill="#a0a0a0" textLength="65" lengthAdjust="spacingAndGlyphs">MAIN TREND</text>
<text x="564" y="610" fill="#e01010" font-size="13" textLength="24" lengthAdjust="spacingAndGlyphs">M15</text>
<text x="594" y="610" fill="#e01010" font-size="13" textLength="23" lengthAdjust="spacingAndGlyphs">M30</text>
<text x="624" y="610" fill="#e01010" font-size="13">H1</text>
<text x="643" y="610" fill="#00e000" font-size="13">H4</text>
<text x="670" y="613" fill="#f00000" font-size="17" textLength="83" lengthAdjust="spacingAndGlyphs">TREND/DN</text>
<text x="759" y="609" fill="#ee9a00" textLength="41" lengthAdjust="spacingAndGlyphs">MEDIUM</text>
<text x="808" y="609" fill="#a0a0a0" textLength="76" lengthAdjust="spacingAndGlyphs">MAJOR TREND</text>
<text x="889" y="610" fill="#e01010" font-size="13">D1</text>
<text x="909" y="610" fill="#e01010" font-size="13">W1</text>
<text x="934" y="610" fill="#e01010" font-size="13">MN</text>
</g>

<!-- panel 3 mini bars -->
<g stroke="#222">
<g fill="#aaa"><rect x="1025.5" y="609.5" width="19" height="13"/><rect x="1044.5" y="609.5" width="17" height="13"/><rect x="1061.5" y="609.5" width="17" height="13"/><rect x="1078.5" y="609.5" width="17" height="13"/><rect x="1095.5" y="609.5" width="17" height="13"/><rect x="1112.5" y="609.5" width="17" height="13"/><rect x="1129.5" y="609.5" width="17" height="13"/><rect x="1146.5" y="609.5" width="17" height="13"/></g>
<g fill="#f00"><rect x="1019.5" y="625.5" width="9" height="13" rx="1"/><rect x="1029.5" y="625.5" width="9" height="13" rx="1"/><rect x="1039.5" y="625.5" width="9" height="13" rx="1"/><rect x="1049.5" y="625.5" width="9" height="13" rx="1"/><rect x="1069.5" y="625.5" width="9" height="13" rx="1"/><rect x="1079.5" y="625.5" width="9" height="13" rx="1"/></g>
<rect x="1059.5" y="625.5" width="9" height="13" rx="1" fill="#a01010"/>
<rect x="1089.5" y="625.5" width="9" height="13" rx="1" fill="#006400"/>
<rect x="1125.5" y="625.5" width="49" height="13" fill="#aaa"/>
<g fill="#f00"><rect x="1009.5" y="667.5" width="9" height="13" rx="1"/><rect x="1019.5" y="667.5" width="9" height="13" rx="1"/><rect x="1029.5" y="667.5" width="9" height="13" rx="1"/><rect x="1039.5" y="667.5" width="9" height="13" rx="1"/><rect x="1049.5" y="667.5" width="9" height="13" rx="1"/><rect x="1059.5" y="667.5" width="9" height="13" rx="1"/><rect x="1069.5" y="667.5" width="9" height="13" rx="1"/><rect x="1079.5" y="667.5" width="9" height="13" rx="1"/><rect x="1089.5" y="667.5" width="9" height="13" rx="1"/></g>
<rect x="1125.5" y="667.5" width="49" height="13" fill="#aaa"/>
<g fill="#aaa"><rect x="1008.5" y="682.5" width="19" height="13"/><rect x="1027.5" y="682.5" width="17" height="13"/><rect x="1044.5" y="682.5" width="17" height="13"/><rect x="1061.5" y="682.5" width="17" height="13"/><rect x="1078.5" y="682.5" width="17" height="13"/><rect x="1095.5" y="682.5" width="17" height="13"/><rect x="1112.5" y="682.5" width="17" height="13"/><rect x="1129.5" y="682.5" width="17" height="13"/><rect x="1146.5" y="682.5" width="17" height="13"/></g>
</g>
<g font-size="10" fill="#333" text-anchor="middle">
<text x="1034" y="620">M5</text><text x="1053" y="620" textLength="16" lengthAdjust="spacingAndGlyphs">M15</text><text x="1070" y="620" textLength="16" lengthAdjust="spacingAndGlyphs">M30</text><text x="1086" y="620">H1</text><text x="1103" y="620">H4</text><text x="1120" y="620">D1</text><text x="1137" y="620">W1</text><text x="1154" y="620">MN</text>
<text x="1017" y="693">M1</text><text x="1036" y="693">M5</text><text x="1053" y="693" textLength="16" lengthAdjust="spacingAndGlyphs">M15</text><text x="1070" y="693" textLength="16" lengthAdjust="spacingAndGlyphs">M30</text><text x="1086" y="693">H1</text><text x="1103" y="693">H4</text><text x="1120" y="693">D1</text><text x="1137" y="693">W1</text><text x="1154" y="693">MN</text>
</g>
<text x="1148" y="635" font-size="10.5" fill="#333" text-anchor="middle">0</text>
<text x="1148" y="677" font-size="10.5" fill="#333" text-anchor="middle">0</text>

<!-- Genesis -->
<rect x="1196" y="612" width="197" height="84" fill="#465664"/>
<rect x="1196" y="629" width="197" height="17" fill="#536270"/>
<rect x="1196" y="646" width="197" height="17" fill="#4a5966"/>
<rect x="1196" y="663" width="197" height="17" fill="#536270"/>
<rect x="1196" y="680" width="197" height="16" fill="#4a5966"/>
<text x="1198" y="623" font-size="10" fill="#6e7c88" textLength="31" lengthAdjust="spacingAndGlyphs">Genesis</text>
<g class="d" font-size="11" fill="#14148c" text-anchor="middle">
<text x="1240" y="625">M5</text><text x="1265" y="625">M15</text><text x="1297" y="625">H1</text><text x="1325" y="625">H4</text><text x="1353" y="625">D1</text><text x="1381" y="625">W1</text>
</g>
<g class="d" font-size="12.5" fill="#0000ff">
<text x="1202" y="643">TVI</text><text x="1202" y="660">CCI</text><text x="1202" y="676">T3</text><text x="1202" y="693">GHL</text>
</g>
<g fill="#f01010">
<use href="#da" transform="translate(1238.5,638) scale(.8)"/><use href="#da" transform="translate(1267.5,638) scale(.8)"/><use href="#da" transform="translate(1296.5,638) scale(.8)"/><use href="#da" transform="translate(1354.5,638) scale(.8)"/><use href="#da" transform="translate(1383.5,638) scale(.8)"/>
<use href="#da" transform="translate(1238.5,655) scale(.8)"/><use href="#da" transform="translate(1267.5,655) scale(.8)"/><use href="#da" transform="translate(1296.5,655) scale(.8)"/><use href="#da" transform="translate(1325.5,655) scale(.8)"/><use href="#da" transform="translate(1354.5,655) scale(.8)"/><use href="#da" transform="translate(1383.5,655) scale(.8)"/>
<use href="#da" transform="translate(1238.5,672) scale(.8)"/><use href="#da" transform="translate(1267.5,672) scale(.8)"/><use href="#da" transform="translate(1296.5,672) scale(.8)"/><use href="#da" transform="translate(1354.5,672) scale(.8)"/><use href="#da" transform="translate(1383.5,672) scale(.8)"/>
<use href="#da" transform="translate(1238.5,689) scale(.8)"/><use href="#da" transform="translate(1267.5,689) scale(.8)"/><use href="#da" transform="translate(1296.5,689) scale(.8)"/><use href="#da" transform="translate(1325.5,689) scale(.8)"/><use href="#da" transform="translate(1354.5,689) scale(.8)"/><use href="#da" transform="translate(1383.5,689) scale(.8)"/>
</g>
<g fill="#22c83c">
<use href="#da" transform="translate(1325,637) scale(.8,-.8)"/><use href="#da" transform="translate(1325,671) scale(.8,-.8)"/>
</g>

<!-- frames -->
<g fill="none" stroke="#fff">
<rect x="2.5" y="2.5" width="1391" height="432"/>
<rect x="2.5" y="436.5" width="1391" height="155"/>
<rect x="2.5" y="593.5" width="1391" height="103"/>
</g>

<!-- axis -->
<path d="M1394,35.5h3M1394,68.5h3M1394,101.5h3M1394,134.5h3M1394,167.5h3M1394,200.5h3M1394,233.5h3M1394,266.5h3M1394,299.5h3M1394,332.5h3M1394,431.5h3M1394,443.5h3M1394,514.5h3M1394,584.5h3M1394,600.5h3M1394,643.5h3M1394,690.5h3" stroke="#fff"/>
<path d="M3.5,697v3M67.5,697v3M131.5,697v3M195.5,697v3M259.5,697v3M323.5,697v3M387.5,697v3M451.5,697v3M515.5,697v3M579.5,697v3M643.5,697v3M707.5,697v3" stroke="#fff"/>
<rect x="1395" y="48.5" width="40" height="11" fill="#808080"/>
<rect x="1395" y="149.5" width="40" height="11" fill="#0000ff"/>
<rect x="1395" y="249.5" width="40" height="11" fill="#808080"/>
<rect x="1395" y="311" width="40" height="11" fill="#fff"/>
<rect x="1395" y="355" width="40" height="11" fill="#fff"/>
<rect x="1395" y="392" width="40" height="11" fill="#fff"/>
<rect x="1395" y="411.5" width="40" height="11" fill="#fff"/>
<g font-size="10.5" fill="#fff">
<text x="1399" y="39" textLength="33" lengthAdjust="spacingAndGlyphs">1.00975</text>
<text x="1399" y="72" textLength="33" lengthAdjust="spacingAndGlyphs">1.00685</text>
<text x="1399" y="105" textLength="33" lengthAdjust="spacingAndGlyphs">1.00400</text>
<text x="1399" y="138" textLength="33" lengthAdjust="spacingAndGlyphs">1.00110</text>
<text x="1399" y="171" textLength="33" lengthAdjust="spacingAndGlyphs">0.99820</text>
<text x="1399" y="204" textLength="33" lengthAdjust="spacingAndGlyphs">0.99535</text>
<text x="1399" y="237" textLength="33" lengthAdjust="spacingAndGlyphs">0.99245</text>
<text x="1399" y="270" textLength="33" lengthAdjust="spacingAndGlyphs">0.98960</text>
<text x="1399" y="303" textLength="33" lengthAdjust="spacingAndGlyphs">0.98670</text>
<text x="1399" y="336" textLength="33" lengthAdjust="spacingAndGlyphs">0.98385</text>
<text x="1399" y="435" textLength="33" lengthAdjust="spacingAndGlyphs">0.97520</text>
<text x="1399" y="58" fill="#505050" textLength="33" lengthAdjust="spacingAndGlyphs">1.00806</text>
<text x="1399" y="159" fill="#20208c" textLength="33" lengthAdjust="spacingAndGlyphs">0.99933</text>
<text x="1399" y="258.5" fill="#505050" textLength="33" lengthAdjust="spacingAndGlyphs">0.99060</text>
<text x="1399" y="320" fill="#333" textLength="33" lengthAdjust="spacingAndGlyphs">0.98521</text>
<text x="1399" y="364" fill="#333" textLength="33" lengthAdjust="spacingAndGlyphs">0.98137</text>
<text x="1399" y="401" fill="#333" textLength="33" lengthAdjust="spacingAndGlyphs">0.97817</text>
<text x="1399" y="420.5" fill="#333" textLength="33" lengthAdjust="spacingAndGlyphs">0.97648</text>
<text x="1397" y="447" textLength="28" lengthAdjust="spacingAndGlyphs">0.3493</text>
<text x="1397" y="518" textLength="17" lengthAdjust="spacingAndGlyphs">0.00</text>
<text x="1397" y="588" textLength="31" lengthAdjust="spacingAndGlyphs">-0.3475</text>
<text x="1397" y="604" textLength="28" lengthAdjust="spacingAndGlyphs">0.0054</text>
<text x="1397" y="647" textLength="17" lengthAdjust="spacingAndGlyphs">0.00</text>
<text x="1397" y="693" textLength="31" lengthAdjust="spacingAndGlyphs">-0.0059</text>
</g>
<g font-size="10.5" fill="#fff">
<text x="2" y="709" textLength="46" lengthAdjust="spacingAndGlyphs">7 Apr 2017</text>
<text x="66" y="709" textLength="54" lengthAdjust="spacingAndGlyphs">12 Apr 04:00</text>
<text x="130" y="709" textLength="54" lengthAdjust="spacingAndGlyphs">14 Apr 20:00</text>
<text x="194" y="709" textLength="54" lengthAdjust="spacingAndGlyphs">19 Apr 12:00</text>
<text x="258" y="709" textLength="54" lengthAdjust="spacingAndGlyphs">24 Apr 04:00</text>
<text x="322" y="709" textLength="54" lengthAdjust="spacingAndGlyphs">26 Apr 20:00</text>
<text x="386" y="709" textLength="53" lengthAdjust="spacingAndGlyphs">1 May 12:00</text>
<text x="450" y="709" textLength="53" lengthAdjust="spacingAndGlyphs">4 May 04:00</text>
<text x="514" y="709" textLength="53" lengthAdjust="spacingAndGlyphs">8 May 20:00</text>
<text x="578" y="709" textLength="57" lengthAdjust="spacingAndGlyphs">11 May 12:00</text>
<text x="642" y="709" textLength="57" lengthAdjust="spacingAndGlyphs">16 May 04:00</text>
<text x="707" y="709" textLength="20" lengthAdjust="spacingAndGlyphs">18 M</text>
</g>
<rect x="727" y="700" width="80" height="12" fill="#ffcc00"/>
<text x="731" y="709.5" font-size="10.5" fill="#444" textLength="72" lengthAdjust="spacingAndGlyphs">2017.05.21 08:00</text>
</svg>
</body></html>
